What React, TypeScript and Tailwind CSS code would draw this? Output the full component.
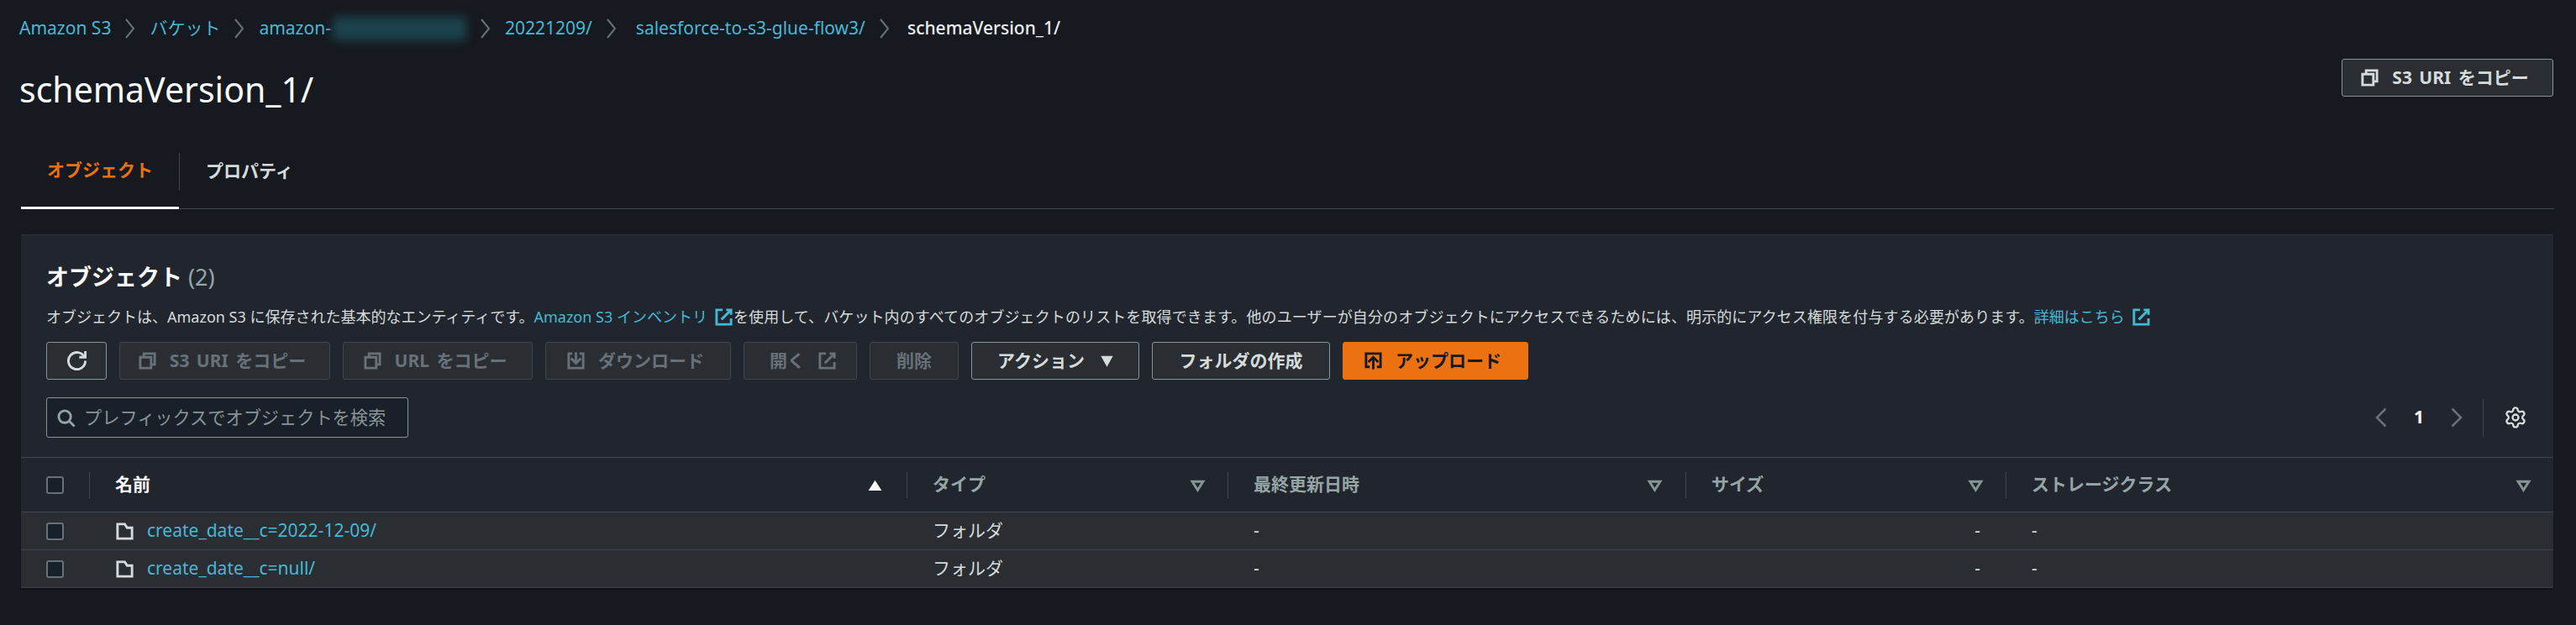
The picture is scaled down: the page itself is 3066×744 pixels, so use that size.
import React from "react";
import { Settings } from "lucide-react";

const FONT = "[font-family:'Noto_Sans','Noto_Sans_CJK_JP',sans-serif]";

function Ico({ children, className = "" }: { children: React.ReactNode; className?: string }) {
  return (
    <svg viewBox="0 0 16 16" fill="none" stroke="currentColor" strokeWidth="2" className={`w-[23px] h-[23px] shrink-0 ${className}`}>
      {children}
    </svg>
  );
}
const CopyI = () => (
  <Ico>
    <path d="M2 5h9v9H2z" />
    <path d="M5 5V2h9v9h-3" />
  </Ico>
);
const ExtI = ({ className = "" }: { className?: string }) => (
  <Ico className={className}>
    <path d="M10 2h4v4" />
    <path d="M6 10l8-8" />
    <path d="M14 9v5H2V2h5" />
  </Ico>
);
const FolderI = () => (
  <Ico className="text-[#d5dbdb]">
    <path d="M2 14V2h6l2 3h4v9z" />
  </Ico>
);

function Crumb({ children, last, after = "mr-[17px]" }: { children: React.ReactNode; last?: boolean; after?: string }) {
  return (
    <>
      <span className={last ? "font-medium text-[#eaeded]" : "text-[#44b9d6]"}>{children}</span>
      {!last && (
        <svg viewBox="0 0 12 24" fill="none" stroke="#687078" strokeWidth="2" className={`w-[12px] h-[24px] ml-[17px] ${after}`}>
          <path d="M1 1l9 11-9 11" />
        </svg>
      )}
    </>
  );
}

function Btn({
  children,
  className,
  variant = "normal",
}: {
  children: React.ReactNode;
  className: string;
  variant?: "normal" | "disabled" | "primary";
}) {
  const v =
    variant === "disabled"
      ? "border-[#414750] bg-[#2a2e33] text-[#687078]"
      : variant === "primary"
      ? "border-[#ec7211] bg-[#ec7211] text-[#16191f]"
      : "border-[#879596] bg-[#2a2e33] text-[#d5dbdb]";
  return (
    <div className={`h-[45px] flex items-center justify-center gap-[15px] border rounded-[3px] text-[21px] font-bold [word-spacing:3px] ${v} ${className}`}>
      {children}
    </div>
  );
}

const Check = () => <div className="w-[21px] h-[21px] rounded-[3px] border-2 border-[#687078] bg-[#1a2029]" />;

const Sort = ({ active }: { active?: boolean }) =>
  active ? (
    <svg viewBox="0 0 16 16" className="w-[23px] h-[23px]">
      <path d="M2.5 12.5L8 4l5.5 8.5z" fill="#fafafa" />
    </svg>
  ) : (
    <Ico className="text-[#879596]">
      <path d="M3.5 5h9L8 12z" />
    </Ico>
  );

const GRID = "grid grid-cols-[81px_973px_382px_545px_381px_1fr]";

function Head({ label, active, right }: { label: string; active?: boolean; right: string }) {
  return (
    <div className="h-full flex items-center">
      <div className="w-px h-[31px] bg-[#414750] shrink-0" />
      <div className={`ml-[30px] text-[21px] font-bold ${active ? "text-[#fafafa]" : "text-[#95a5a6]"}`}>{label}</div>
      <div className={`ml-auto ${right}`}>
        <Sort active={active} />
      </div>
    </div>
  );
}

function Row({ name }: { name: string }) {
  return (
    <div className={`${GRID} h-[45px] bg-[#2a2e33] border-t border-[#414750] text-[21px] text-[#d5dbdb] items-center`}>
      <div className="pl-[30px]">
        <Check />
      </div>
      <div className="pl-[31px] flex items-center gap-[15px]">
        <FolderI />
        <span className="text-[#44b9d6]">{name}</span>
      </div>
      <div className="pl-[31px]">フォルダ</div>
      <div className="pl-[31px]">-</div>
      <div className="text-right pr-[30px]">-</div>
      <div className="pl-[31px]">-</div>
    </div>
  );
}

export default function App() {
  return (
    <div className={`w-[3066px] h-[744px] overflow-hidden bg-[#16191f] text-[#d5dbdb] ${FONT}`}>
      <div className="h-[67px] pl-[23px] flex items-center text-[21px]">
        <Crumb>Amazon S3</Crumb>
        <Crumb>バケット</Crumb>
        <Crumb>
          <span className="inline-flex items-center">
            amazon-
            <span className="inline-block w-[159px] h-[28px] ml-[2px] bg-[#1d5662] blur-[6px] opacity-70" />
          </span>
        </Crumb>
        <Crumb after="mr-[23px]">20221209/</Crumb>
        <Crumb after="mr-[21px]">salesforce-to-s3-glue-flow3/</Crumb>
        <Crumb last>schemaVersion_1/</Crumb>
      </div>

      <div className="h-[87px] pl-[23px] pr-[27px] flex items-start justify-between">
        <div className="text-[41px] leading-[78px] text-[#fafafa]">schemaVersion_1/</div>
        <div className="mt-[3px]">
          <Btn className="w-[252px] pr-[7px]">
            <CopyI />
            S3 URI をコピー
          </Btn>
        </div>
      </div>

      <div className="ml-[25px] mr-[26px] h-[95px] border-b border-[#414750] flex items-center">
        <div className="w-[188px] h-[95px] pt-[6px] flex items-center justify-center text-[21px] font-bold text-[#ec7211] border-b-[3px] border-white -mb-px">
          オブジェクト
        </div>
        <div className="w-px h-[45px] mt-[6px] bg-[#414750]" />
        <div className="pl-[31px] pt-[6px] text-[21px] font-bold text-[#d5dbdb]">プロパティ</div>
      </div>

      <div className="mt-[30px] ml-[25px] mr-[27px] bg-[#21262e] border-t border-[#2f343c] shadow-[0_1px_1px_rgba(0,0,0,0.5)]">
        <div className="pl-[30px] pr-[33px] pt-[30px]">
          <div className="flex items-baseline gap-[7px] h-[40px]">
            <span className="text-[27px] font-bold text-[#fafafa]">オブジェクト</span>
            <span className="text-[27px] text-[#95a5a6]">(2)</span>
          </div>
          <div className="mt-[14px] h-[26px] flex items-center text-[18px] text-[#d5dbdb] whitespace-nowrap">
            オブジェクトは、Amazon S3 に保存された基本的なエンティティです。
            <span className="text-[#44b9d6] inline-flex items-center gap-[8px]">
              Amazon S3 インベントリ
              <ExtI />
            </span>
            <span className="tracking-[0.11px]">
              を使用して、バケット内のすべてのオブジェクトのリストを取得できます。他のユーザーが自分のオブジェクトにアクセスできるためには、明示的にアクセス権限を付与する必要があります。
            </span>
            <span className="text-[#44b9d6] inline-flex items-center gap-[8px]">
              詳細はこちら
              <ExtI />
            </span>
          </div>

          <div className="mt-[17px] flex gap-[15px]">
            <Btn className="w-[72px]">
              <Ico>
                <path d="M10 5h5V0" />
                <path d="M15 8a7 7 0 1 1-.7-3" />
              </Ico>
            </Btn>
            <Btn className="w-[251px] pr-[7px]" variant="disabled">
              <CopyI />
              S3 URI をコピー
            </Btn>
            <Btn className="w-[226px] pr-[7px]" variant="disabled">
              <CopyI />
              URL をコピー
            </Btn>
            <Btn className="w-[221px] pr-[7px]" variant="disabled">
              <Ico>
                <path d="M11 2h3v12H2V2h3" />
                <path d="M4 6l4 4 4-4" />
                <path d="M8 1v9" />
              </Ico>
              ダウンロード
            </Btn>
            <Btn className="w-[135px] pl-[7px]" variant="disabled">
              開く
              <ExtI />
            </Btn>
            <Btn className="w-[106px]" variant="disabled">
              削除
            </Btn>
            <Btn className="w-[200px] pl-[4px]">
              アクション
              <svg viewBox="0 0 16 16" className="w-[23px] h-[23px]">
                <path d="M3 4h10l-5 9z" fill="currentColor" />
              </svg>
            </Btn>
            <Btn className="w-[212px]">フォルダの作成</Btn>
            <Btn className="w-[221px] pr-[7px]" variant="primary">
              <Ico>
                <path d="M5 13H2V2h12v11h-3" />
                <path d="M4 9l4-4 4 4" />
                <path d="M8 15V5" />
              </Ico>
              アップロード
            </Btn>
          </div>

          <div className="mt-[21px] h-[48px] flex items-center">
            <div className="w-[431px] h-[48px] flex items-center gap-[10px] pl-[11px] border border-[#879596] rounded-[3px] bg-[#1a2029]">
              <Ico className="text-[#95a5a6]">
                <circle cx="7" cy="7" r="5" />
                <path d="M15 15l-4.5-4.5" />
              </Ico>
              <span className="text-[21.2px] text-[#879596]">プレフィックスでオブジェクトを検索</span>
            </div>
            <div className="ml-auto flex items-center">
              <svg viewBox="0 0 14 24" fill="none" stroke="#687078" strokeWidth="2.5" className="w-[14px] h-[24px]">
                <path d="M12.5 1.5L2 12l10.5 10.5" />
              </svg>
              <span className="w-[76px] text-center text-[21px] font-bold text-[#fafafa]">1</span>
              <svg viewBox="0 0 14 24" fill="none" stroke="#687078" strokeWidth="2.5" className="w-[14px] h-[24px]">
                <path d="M1.5 1.5L12 12 1.5 22.5" />
              </svg>
              <div className="ml-[24px] w-px h-[45px] bg-[#414750]" />
              <Settings className="ml-[24px] -mr-[2px] w-[28px] h-[28px] text-[#d5dbdb]" strokeWidth={2} />
            </div>
          </div>
        </div>

        <div className={`${GRID} mt-[23px] h-[65px] border-t border-[#414750] items-center`}>
          <div className="pl-[30px] flex items-center h-full">
            <Check />
          </div>
          <Head label="名前" active right="mr-[26px]" />
          <Head label="タイプ" right="mr-[24px]" />
          <Head label="最終更新日時" right="mr-[25px]" />
          <Head label="サイズ" right="mr-[24px]" />
          <Head label="ストレージクラス" right="mr-[24px]" />
        </div>
        <Row name="create_date__c=2022-12-09/" />
        <Row name="create_date__c=null/" />
        <div className="h-px bg-[#414750]" />
      </div>
    </div>
  );
}
